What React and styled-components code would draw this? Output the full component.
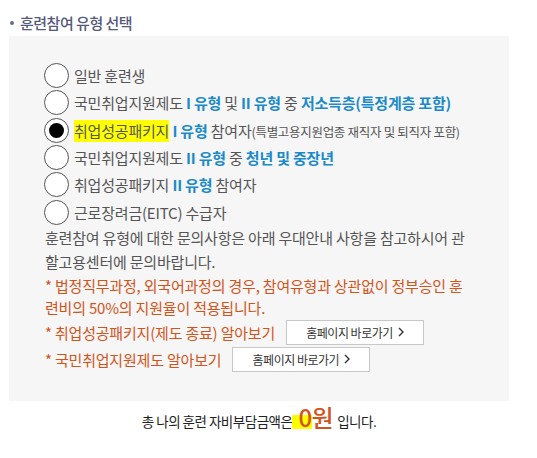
import React from 'react'
import styled, { createGlobalStyle } from 'styled-components'

const GlobalStyle = createGlobalStyle`
    body {
        margin: 0;
        background: #fff;
        font-family: "Noto Sans CJK KR", "Noto Sans", sans-serif;
        letter-spacing: -0.2px;
    }
`

const Wrap = styled.div`
    width: 537px;
    padding-top: 11px;
`

const Title = styled.h3`
    margin: 0 0 0 10px;
    font-size: 15px;
    font-weight: 500;
    letter-spacing: -0.5px;
    color: #55597c;
    line-height: 24px;
    display: flex;
    align-items: center;
    gap: 6px;
    &::before {
        content: '';
        width: 4px;
        height: 4px;
        border-radius: 50%;
        background: #6a6e8e;
    }
`

const Box = styled.div`
    margin: 1px 0 0 9px;
    width: 500px;
    height: 365px;
    box-sizing: border-box;
    background: #f6f6f6;
    padding: 26px 33px 0 35px;
`

const RadioRow = styled.label`
    display: flex;
    align-items: center;
    height: 27.3px;
    font-size: 15px;
    color: #555;
    white-space: nowrap;
`

const Circle = styled.span`
    flex: none;
    width: 23px;
    height: 23px;
    border: 1px solid #555;
    border-radius: 50%;
    background: #fff;
    margin-right: 5px;
    display: flex;
    align-items: center;
    justify-content: center;
    &::after {
        content: '';
        display: ${p => (p.checked ? 'block' : 'none')};
        width: 15px;
        height: 15px;
        border-radius: 50%;
        background: #000;
    }
`

const Blue = styled.b`
    color: #1b8ac8;
    font-weight: 700;
`

const Mark = styled.span`
    background: #ffff00;
    padding-bottom: 1px;
`

const Small = styled.span`
    font-size: 12.5px;
    letter-spacing: -0.3px;
`

const Info = styled.p`
    margin: 0 0 0 1px;
    font-size: 15px;
    line-height: 24px;
    color: #555;
`

const Notice = styled.p`
    margin: 1px 0 0 1px;
    font-size: 15px;
    line-height: 22px;
    color: #d2541a;
`

const LinkRow = styled.div`
    display: flex;
    align-items: center;
    gap: 11px;
    height: 27px;
    font-size: 15px;
    color: #d2541a;
    margin-left: 1px;
    white-space: nowrap;
`

const Button = styled.button`
    flex: none;
    width: 138px;
    height: 25px;
    border: 1px solid #c8c8c8;
    background: #fff;
    font-family: inherit;
    font-size: 12px;
    letter-spacing: -0.5px;
    color: #333;
    display: flex;
    align-items: center;
    justify-content: center;
    gap: 5px;
    cursor: pointer;
`

const Total = styled.div`
    display: flex;
    justify-content: center;
    align-items: baseline;
    padding-right: 19px;
    font-size: 13.5px;
    line-height: 32px;
    letter-spacing: -0.5px;
    color: #222;
`

const Won = styled.span`
    font-size: 24px;
    font-weight: 500;
    color: #d2541a;
    margin: 0 4px 0 0;
    & span {
        background: linear-gradient(transparent 45%, #ffff00 45%, #ffff00 85%, transparent 85%);
        padding-left: 6px;
    }
`

const Chevron = () => (
    <svg width='6' height='10' viewBox='0 0 6 10'>
        <path d='M1 1l4 4-4 4' fill='none' stroke='#333' strokeWidth='1.4' />
    </svg>
)

const options = [
    { key: 1, label: <>일반 훈련생</> },
    { key: 2, label: <>국민취업지원제도 <Blue>I 유형</Blue> 및 <Blue>II 유형</Blue> 중 <Blue>저소득층(특정계층 포함)</Blue></> },
    { key: 3, checked: true, label: <><Mark>취업성공패키지</Mark> <Blue>I 유형</Blue> 참여자<Small>(특별고용지원업종 재직자 및 퇴직자 포함)</Small></> },
    { key: 4, label: <>국민취업지원제도 <Blue>II 유형</Blue> 중 <Blue>청년 및 중장년</Blue></> },
    { key: 5, label: <>취업성공패키지 <Blue>II 유형</Blue> 참여자</> },
    { key: 6, label: <>근로장려금(EITC) 수급자</> },
]

export default function App() {
    return (
        <Wrap>
            <GlobalStyle />
            <Title>훈련참여 유형 선택</Title>
            <Box>
                {options.map(o => (
                    <RadioRow key={o.key}>
                        <Circle checked={o.checked} />
                        <span>{o.label}</span>
                    </RadioRow>
                ))}
                <Info>훈련참여 유형에 대한 문의사항은 아래 우대안내 사항을 참고하시어 관할고용센터에 문의바랍니다.</Info>
                <Notice>* 법정직무과정, 외국어과정의 경우, 참여유형과 상관없이 정부승인 훈련비의 50%의 지원율이 적용됩니다.</Notice>
                <LinkRow>
                    * 취업성공패키지(제도 종료) 알아보기
                    <Button>홈페이지 바로가기 <Chevron /></Button>
                </LinkRow>
                <LinkRow>
                    * 국민취업지원제도 알아보기
                    <Button>홈페이지 바로가기 <Chevron /></Button>
                </LinkRow>
            </Box>
            <Total>
                총 나의 훈련 자비부담금액은 <Won><span>0</span>원</Won> 입니다.
            </Total>
        </Wrap>
    )
}
